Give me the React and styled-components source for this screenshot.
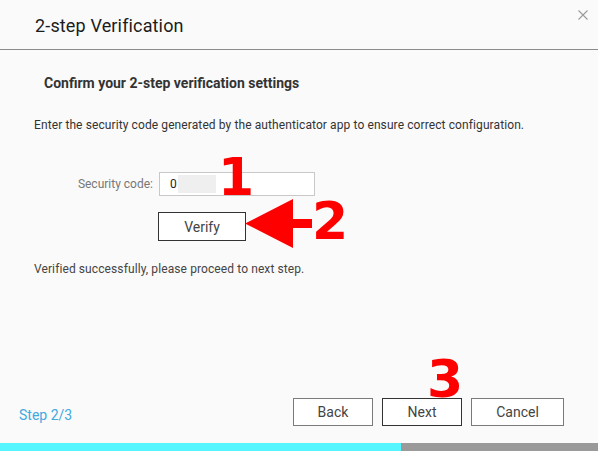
import React from 'react';
import styled, {createGlobalStyle} from "styled-components";

const GlobalStyle = createGlobalStyle`
  html, body {
    margin: 0;
    padding: 0;
    background: #fafafa;
  }
  body {
    font-family: Roboto, "Liberation Sans", sans-serif;
  }
`;

const Dialog = styled.div`
  width: 598px;
  height: 451px;
  display: flex;
  flex-direction: column;
  background-color: #fafafa;
  overflow: hidden;
`;

const Header = styled.div`
  height: 49px;
  border-bottom: 1px solid #8c8c8c;
  display: flex;
  justify-content: space-between;
  align-items: flex-start;
  padding-left: 35px;
  padding-right: 10px;
`;

const Title = styled.h1`
  margin: 0;
  padding-top: 2px;
  line-height: 48px;
  font-size: 18px;
  font-weight: 400;
  letter-spacing: 0.15px;
  color: #1c1c1c;
`;

const CloseButton = styled.button`
  border: none;
  background: none;
  padding: 0;
  margin-top: 10px;
  width: 10px;
  height: 10px;
  display: flex;
  cursor: pointer;
`;

const Body = styled.div`
  flex: 1;
  display: flex;
  flex-direction: column;
  align-items: flex-start;
  padding: 0 34px;
`;

const SectionTitle = styled.h2`
  margin: 25px 0 0 10px;
  font-size: 14px;
  line-height: 16px;
  font-weight: 700;
  color: #333;
`;

const Text = styled.p`
  margin: ${p => p.$top}px 0 0 0;
  font-size: 12px;
  line-height: 16px;
  letter-spacing: 0.1px;
  color: ${p => p.$color || '#333'};
`;

const FieldRow = styled.div`
  position: relative;
  margin-top: 39px;
  display: flex;
  align-items: center;
  gap: 6px;
`;

const Label = styled.label`
  width: 119px;
  text-align: right;
  font-size: 12px;
  color: #777;
`;

const CodeBox = styled.div`
  box-sizing: border-box;
  width: 156px;
  height: 24px;
  border: 1px solid #c8c8c8;
  background: #fff;
  display: flex;
  align-items: center;
  padding-left: 10px;
  font-size: 12px;
  color: #222;
`;

const Masked = styled.span`
  display: inline-block;
  width: 38px;
  height: 18px;
  margin-left: 1px;
  background: #efefef;
`;

const VerifyRow = styled.div`
  position: relative;
  margin: 16px 0 0 124px;
`;

const Button = styled.button`
  box-sizing: border-box;
  width: ${p => p.$width}px;
  height: ${p => p.$height || 28}px;
  border: 1px solid ${p => p.$dark ? '#333' : '#7a7a7a'};
  background: #fff;
  font-family: Roboto, "Liberation Sans", sans-serif;
  font-size: 14px;
  color: #444;
  padding: 0;
  cursor: pointer;
`;

const Marker = styled.span`
  position: absolute;
  left: ${p => p.$x}px;
  top: ${p => p.$y}px;
  font-family: "DejaVu Sans", sans-serif;
  font-weight: 700;
  font-size: 52px;
  line-height: 52px;
  color: #ff0000;
  pointer-events: none;
`;

const Arrow = styled.svg`
  position: absolute;
  left: 87px;
  top: -13px;
  pointer-events: none;
`;

const Footer = styled.div`
  display: flex;
  justify-content: space-between;
  align-items: flex-end;
  padding: 0 34px 17px 19px;
`;

const StepLabel = styled.span`
  font-size: 14px;
  line-height: 16px;
  color: #3fa9e0;
  margin-bottom: 3px;
`;

const Buttons = styled.div`
  display: flex;
  gap: 9px;
`;

const NextWrap = styled.div`
  position: relative;
`;

const Progress = styled.div`
  height: 8px;
  background: #9a9a9a;
  display: flex;
`;

const ProgressFill = styled.div`
  height: 100%;
  background: #55f6ff;
`;

const App = () => {
    const step = 2;
    const total = 3;

    return <Dialog>
        <GlobalStyle/>
        <Header>
            <Title>2-step Verification</Title>
            <CloseButton aria-label="close">
                <svg width="10" height="10" viewBox="0 0 10 10">
                    <path d="M0.5 0.5 L9.5 9.5 M9.5 0.5 L0.5 9.5" stroke="#9a9a9a" strokeWidth="1.1"/>
                </svg>
            </CloseButton>
        </Header>
        <Body>
            <SectionTitle>Confirm your 2-step verification settings</SectionTitle>
            <Text $top={26}>
                Enter the security code generated by the authenticator app to ensure correct configuration.
            </Text>
            <FieldRow>
                <Label>Security code:</Label>
                <CodeBox>0<Masked/></CodeBox>
                <Marker $x={184} $y={-21}>1</Marker>
            </FieldRow>
            <VerifyRow>
                <Button $width={88} $height={29} $dark>Verify</Button>
                <Arrow width="68" height="50" viewBox="0 0 68 50">
                    <polygon points="0,24.5 48,0 48,20 67,20 67,29 48,29 48,49" fill="#ff0000"/>
                </Arrow>
                <Marker $x={154} $y={-17}>2</Marker>
            </VerifyRow>
            <Text $top={20} $color="#444">Verified successfully, please proceed to next step.</Text>
        </Body>
        <Footer>
            <StepLabel>Step {step}/{total}</StepLabel>
            <Buttons>
                <Button $width={80}>Back</Button>
                <NextWrap>
                    <Button $width={80} $dark>Next</Button>
                    <Marker $x={45} $y={-45}>3</Marker>
                </NextWrap>
                <Button $width={93}>Cancel</Button>
            </Buttons>
        </Footer>
        <Progress>
            <ProgressFill style={{width: `${(step / total) * 100 + 0.4}%`}}/>
        </Progress>
    </Dialog>
}

export default App;
